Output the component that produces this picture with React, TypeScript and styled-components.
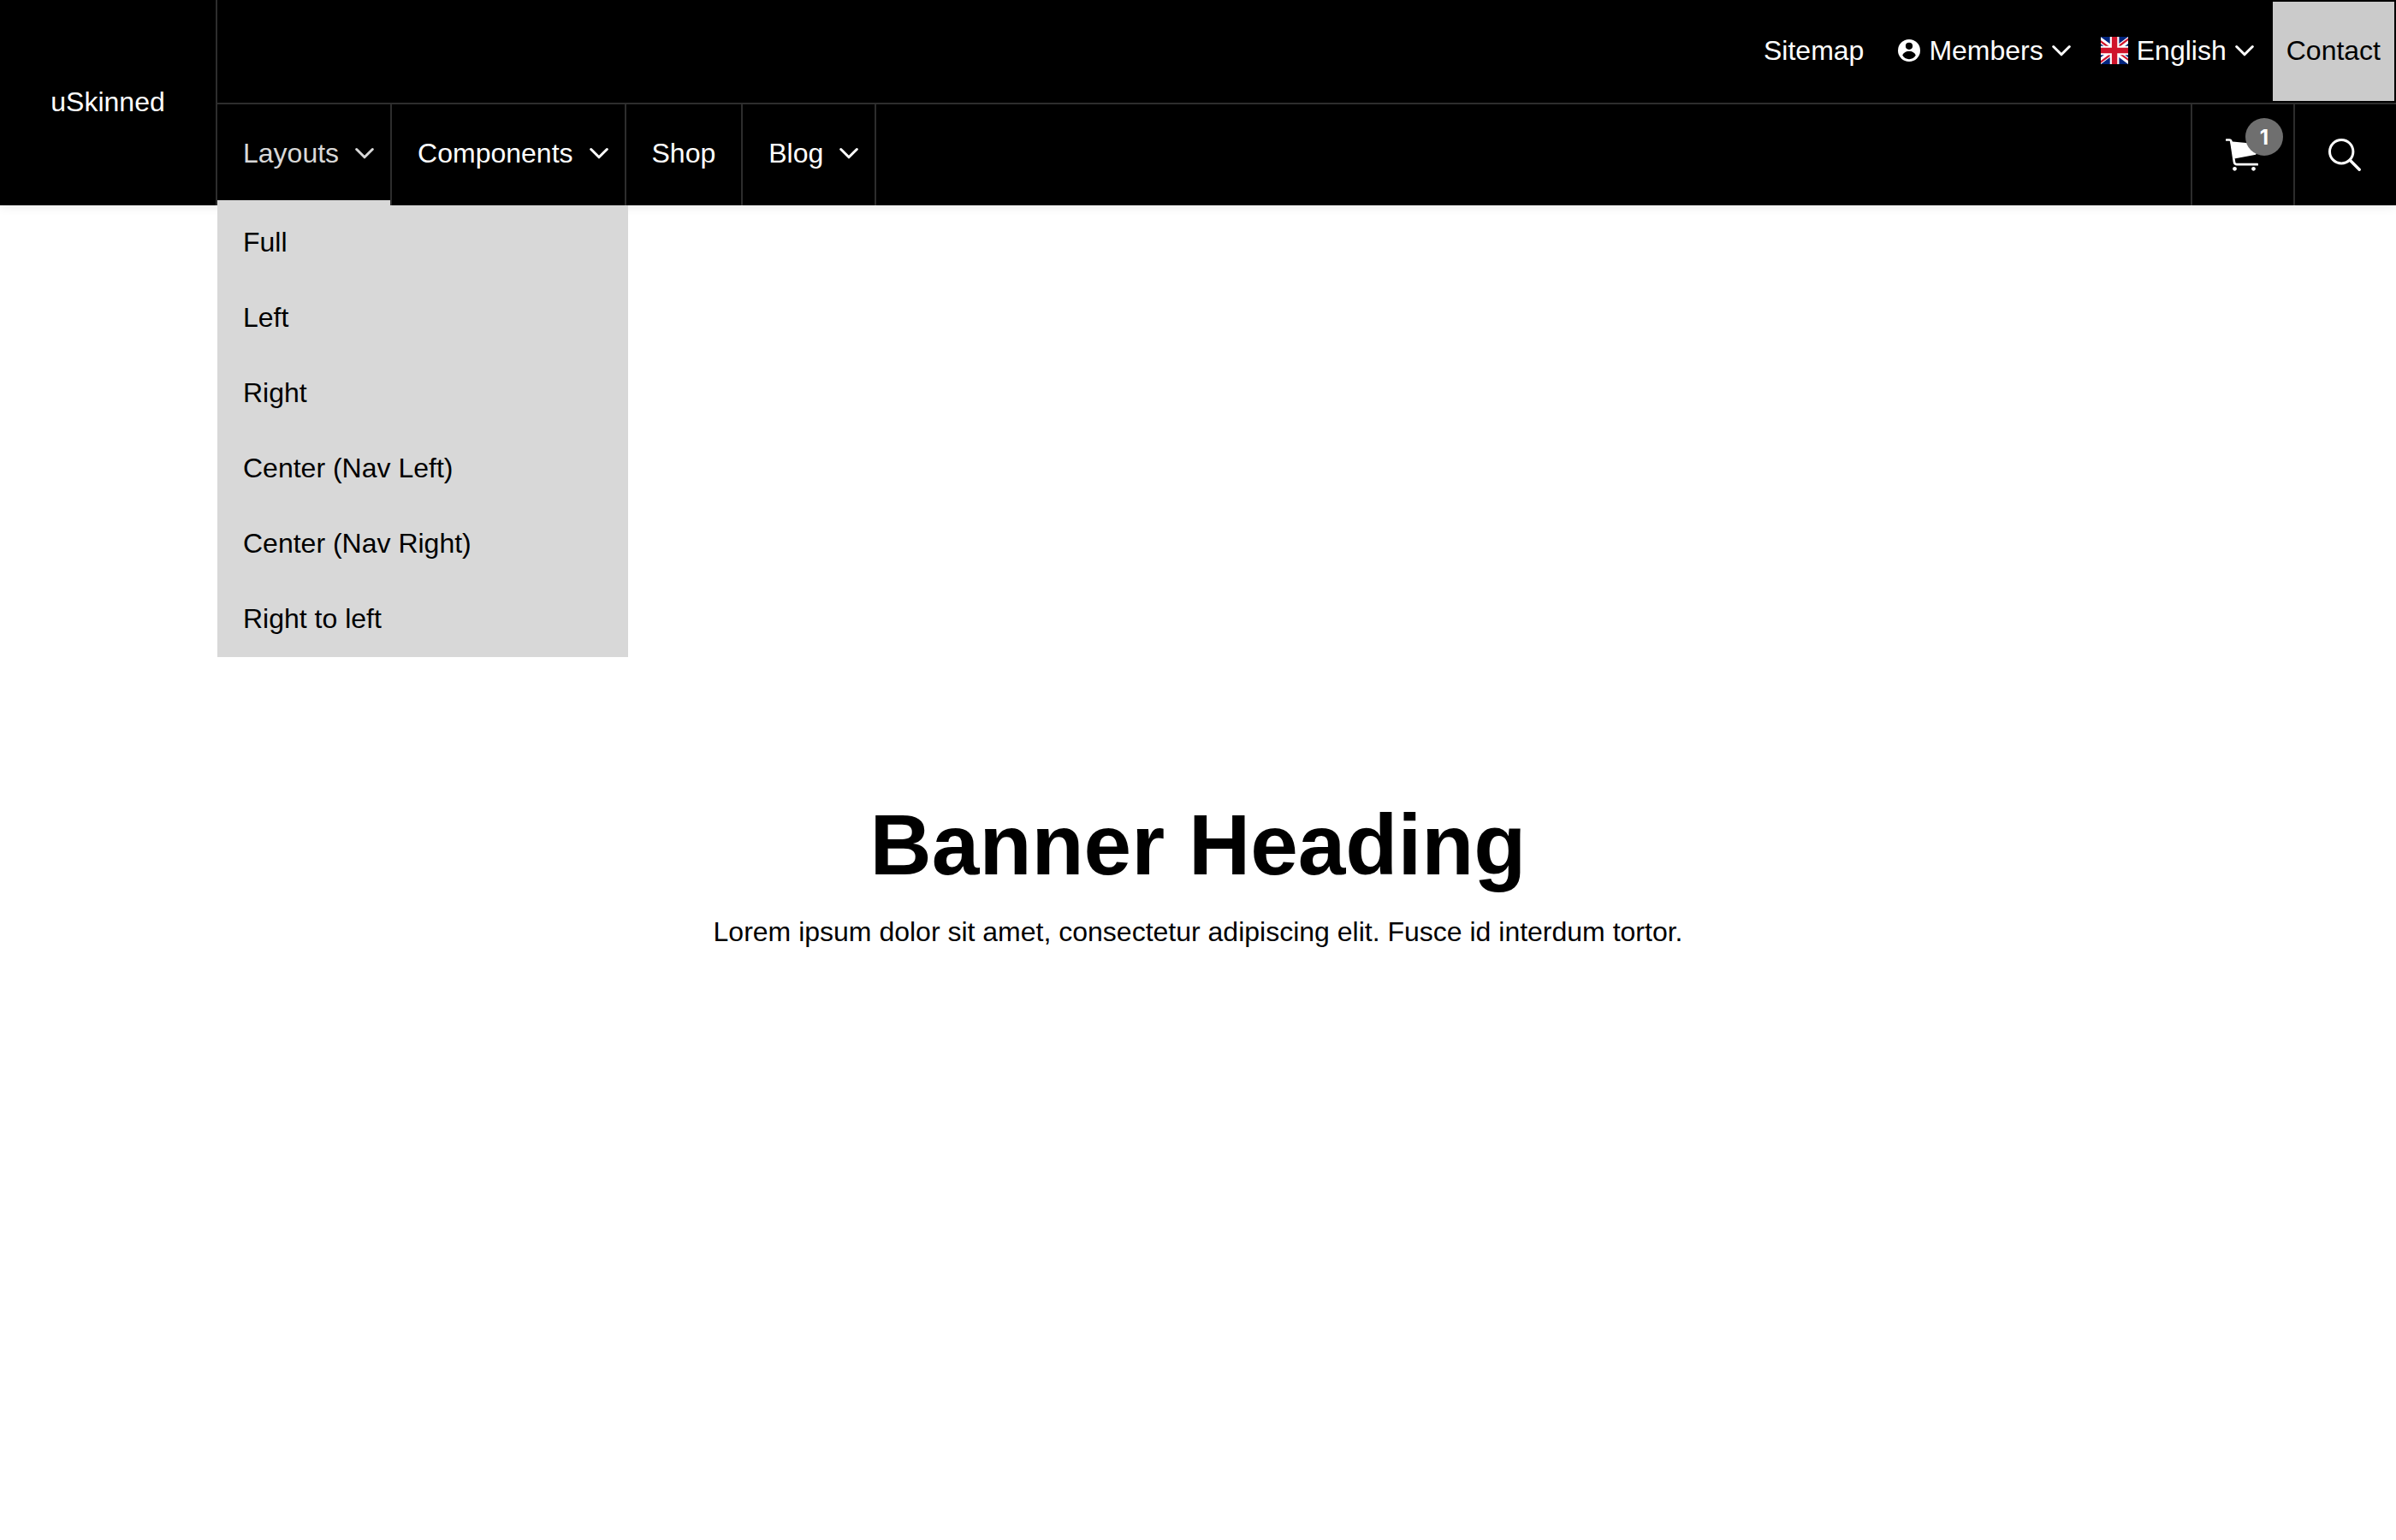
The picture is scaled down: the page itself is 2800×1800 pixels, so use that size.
import React from "react";
import styled, { createGlobalStyle, css } from "styled-components";

const line = "#2d2d2d";
const panel = "#d8d8d8";

const GlobalStyle = createGlobalStyle`
  *, *::before, *::after { box-sizing: border-box; }
  body {
    margin: 0;
    background: #fff;
    color: #000;
    font: 32px/48px "Liberation Sans", Arial, Helvetica, sans-serif;
  }
  a, button { color: inherit; font: inherit; text-decoration: none; }
  button { margin: 0; padding: 0; border: 0; background: none; cursor: pointer; }
  ul { margin: 0; padding: 0; list-style: none; }
  svg { display: block; flex: none; }
`;

const Header = styled.header`
  position: relative;
  z-index: 1;
  display: flex;
  min-height: 240px;
  background: #000;
  color: #fff;
  box-shadow: 0 0 12px rgba(0, 0, 0, 0.12);
`;

const Brand = styled.a`
  display: flex;
  flex: none;
  align-items: center;
  justify-content: center;
  width: 254px;
  padding-bottom: 2px;
  border-right: 2px solid ${line};
`;

const Bars = styled.div`
  flex: 1;
  display: flex;
  flex-direction: column;
`;

const TopBar = styled.nav`
  display: flex;
  justify-content: flex-end;
  align-items: stretch;
  height: 122px;
  border-bottom: 2px solid ${line};
`;

const TopItems = styled.ul`
  display: flex;
  align-items: center;
  padding: 0 20px 2px 0;
`;

const TopItem = styled.li<{ $before?: number }>`
  margin-left: ${(p) => p.$before ?? 0}px;
`;

const topControl = css`
  display: flex;
  align-items: center;
  gap: 10px;
`;

const TopLink = styled.a`
  ${topControl}
`;

const TopButton = styled.button`
  ${topControl}
`;

const Contact = styled.a`
  display: flex;
  align-items: center;
  margin: 2px;
  padding: 0 16px 2px;
  background: #cbcbcb;
  color: #000;
`;

const MainBar = styled.nav`
  flex: 1;
  display: flex;
  justify-content: space-between;
`;

const Menu = styled.ul`
  display: flex;
`;

const MenuItem = styled.li`
  position: relative;
  display: flex;
  border-right: 2px solid ${line};
`;

const MenuLink = styled.a<{ $active?: boolean; $hasMenu?: boolean }>`
  display: flex;
  align-items: center;
  gap: 19px;
  padding: 0 ${(p) => (p.$hasMenu ? 19 : 30)}px 4px 30px;
  color: ${(p) => (p.$active ? panel : "inherit")};
  box-shadow: ${(p) => (p.$active ? `inset 0 -6px ${panel}` : "none")};
`;

const Dropdown = styled.ul`
  position: absolute;
  top: 100%;
  left: 0;
  width: 480px;
  background: ${panel};
  color: #000;
`;

const DropdownLink = styled.a`
  display: block;
  padding: 19px 30px 21px;
`;

const Tools = styled.div`
  display: flex;
`;

const Tool = styled.button`
  position: relative;
  display: flex;
  align-items: center;
  justify-content: center;
  width: 120px;
  padding: 0 2px 0 0;
  border-left: 2px solid ${line};
`;

const Badge = styled.span`
  position: absolute;
  top: 16px;
  right: 12px;
  width: 44px;
  height: 44px;
  border-radius: 50%;
  background: #6f6f6f;
  font: 700 24px/46px Inter, sans-serif;
  text-align: center;
`;

const Banner = styled.main`
  display: flex;
  flex-direction: column;
  align-items: center;
  justify-content: center;
  gap: 18px;
  min-height: calc(100vh - 240px);
  text-align: center;
`;

const Heading = styled.h1`
  margin: 0;
  font-size: 100px;
  line-height: 120px;
`;

const Lead = styled.p`
  margin: 0;
`;

const Chevron = () => (
  <svg width="22" height="14" viewBox="0 0 22 14" fill="none" stroke="currentColor" strokeWidth="3" strokeLinecap="round" strokeLinejoin="round" aria-hidden="true">
    <path d="M1.7 2.500 11 11.800 20.300 2.500" />
  </svg>
);

const Person = () => (
  <svg width="26" height="26" viewBox="0 0 26 26" aria-hidden="true">
    <circle cx="13" cy="13" r="13" fill="#fff" />
    <circle cx="13" cy="7.8" r="4.1" fill="#000" />
    <path d="M5.2 18.6C6.6 15.6 9.6 13.8 13 13.8s6.400 1.800 7.800 4.800C19.200 21.500 16.300 23.200 13 23.200S6.800 21.500 5.200 18.600z" fill="#000" />
  </svg>
);

const UkFlag = () => (
  <svg width="32" height="32" viewBox="80 0 480 480" aria-hidden="true">
    <path fill="#00247d" d="M0 0h640v480H0z" />
    <path fill="#fff" d="m75 0 244 181L562 0h78v62L400 241l240 178v61h-80L320 301 81 480H0v-60l239-178L0 64V0z" />
    <path fill="#cf142b" d="m424 281 216 159v40L369 281zm-184 20 6 35L54 480H0zM640 0v3L391 191l2-44L590 0zM0 0l239 176h-60L0 42z" />
    <path fill="#fff" d="M241 0v480h160V0zM0 160v160h640V160z" />
    <path fill="#cf142b" d="M0 193v96h640v-96zM273 0v480h96V0z" />
  </svg>
);

const Cart = () => (
  <svg width="38" height="38" viewBox="0 0 114 114" fill="#fff" aria-hidden="true">
    <path d="M3 4.500h10q5 0 6 5l11 73q1.500 8 9 8h72" fill="none" stroke="#fff" strokeWidth="8" strokeLinecap="round" strokeLinejoin="round" />
    <path d="M16 10l95 9q3 0 2 4l-6 30q-1 4-5 4L34 70 27 68z" />
    <circle cx="31.500" cy="106" r="7" />
    <circle cx="97.500" cy="106" r="7" />
  </svg>
);

const Search = () => (
  <svg width="38" height="38" viewBox="0 0 38 38" fill="none" stroke="#fff" strokeLinecap="round" aria-hidden="true">
    <circle cx="15.200" cy="15.200" r="13.700" strokeWidth="3" />
    <path d="M25.500 25.500 36.200 36.200" strokeWidth="3.400" />
  </svg>
);

const layouts = ["Full", "Left", "Right", "Center (Nav Left)", "Center (Nav Right)", "Right to left"];

const menu = [
  { label: "Layouts", hasMenu: true, children: layouts },
  { label: "Components", hasMenu: true },
  { label: "Shop" },
  { label: "Blog", hasMenu: true },
];

export default function App() {
  return (
    <>
      <GlobalStyle />
      <Header>
        <Brand href="#">uSkinned</Brand>
        <Bars>
          <TopBar aria-label="Secondary">
            <TopItems>
              <TopItem>
                <TopLink href="#">Sitemap</TopLink>
              </TopItem>
              <TopItem $before={40}>
                <TopButton type="button">
                  <Person />
                  Members
                  <Chevron />
                </TopButton>
              </TopItem>
              <TopItem $before={35}>
                <TopButton type="button">
                  <UkFlag />
                  English
                  <Chevron />
                </TopButton>
              </TopItem>
            </TopItems>
            <Contact href="#">Contact</Contact>
          </TopBar>
          <MainBar aria-label="Main">
            <Menu>
              {menu.map((item) => (
                <MenuItem key={item.label}>
                  <MenuLink href="#" $active={!!item.children} $hasMenu={item.hasMenu}>
                    {item.label}
                    {item.hasMenu && <Chevron />}
                  </MenuLink>
                  {item.children && (
                    <Dropdown>
                      {item.children.map((label) => (
                        <li key={label}>
                          <DropdownLink href="#">{label}</DropdownLink>
                        </li>
                      ))}
                    </Dropdown>
                  )}
                </MenuItem>
              ))}
            </Menu>
            <Tools>
              <Tool type="button" aria-label="Cart">
                <Cart />
                <Badge>1</Badge>
              </Tool>
              <Tool type="button" aria-label="Search">
                <Search />
              </Tool>
            </Tools>
          </MainBar>
        </Bars>
      </Header>
      <Banner>
        <Heading>Banner Heading</Heading>
        <Lead>Lorem ipsum dolor sit amet, consectetur adipiscing elit. Fusce id interdum tortor.</Lead>
      </Banner>
    </>
  );
}
